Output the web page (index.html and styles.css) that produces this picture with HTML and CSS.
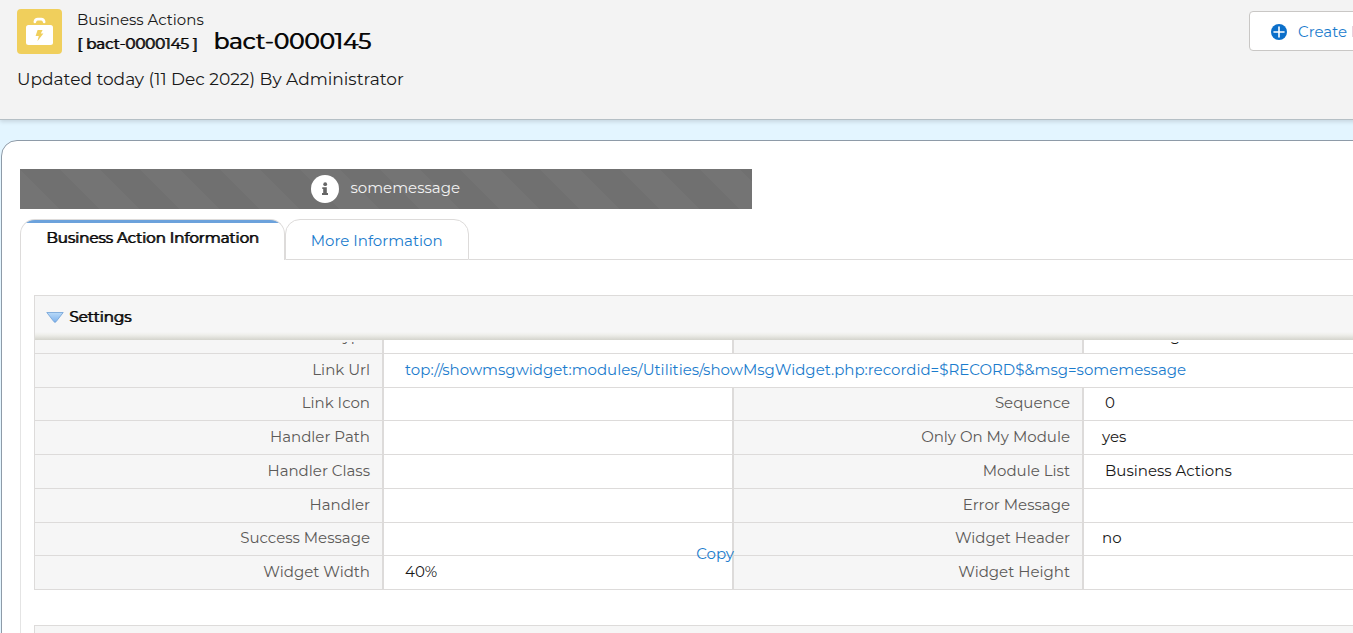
FILE: index.html
```html
<!DOCTYPE html>
<html lang="en">
<head>
<meta charset="utf-8">
<title>bact-0000145 - Business Actions</title>
<link rel="stylesheet" href="styles.css">
</head>
<body>
<header class="page-header">
  <div class="record">
    <div class="record-top">
      <svg class="record-icon" viewBox="0 0 45 45" aria-hidden="true">
        <rect width="45" height="45" rx="4" fill="#f0cf5c"/>
        <path d="M17.800 13q.4-2.900 3-2.900h3.400q2.600 0 3 2.900" fill="none" stroke="#fff" stroke-width="2.600" stroke-linecap="round"/>
        <rect x="9" y="16" width="27" height="20" rx="2.500" fill="#fff"/>
        <path d="M20.600 21h5l-1.800 3.600h2.600l-6 7.600 1.400-5.300h-3.200z" fill="#f0cf5c"/>
      </svg>
      <div class="record-names">
        <div class="module">Business Actions</div>
        <div class="title-row">
          <span class="record-id strong">[ bact-0000145 ]</span>
          <h1 class="record-title strong">bact-0000145</h1>
        </div>
      </div>
    </div>
    <p class="updated">Updated today (11 Dec 2022) By Administrator</p>
  </div>
  <div class="actions">
    <button class="create" type="button">
      <svg class="plus" viewBox="0 0 16 16" aria-hidden="true">
        <circle cx="8" cy="8" r="8" fill="#0b6fca"/>
        <path d="M8 3v10M3 8h10" stroke="#fff" stroke-width="1.600" stroke-linecap="round"/>
      </svg>
      Create Event
    </button>
  </div>
</header>

<main class="panel">
  <div class="banner" role="status">
    <svg class="info" viewBox="0 0 28 28" aria-hidden="true">
      <circle cx="14" cy="14" r="14" fill="#fff"/>
      <circle cx="14.200" cy="9.200" r="1.900" fill="#666"/>
      <path d="M11.300 12.200h4.500v5.900H17v1.900h-6v-1.900h1.200v-4h-.9z" fill="#666"/>
    </svg>
    <span class="message">somemessage</span>
  </div>

  <nav class="tabs">
    <a class="tab active strong" href="#info">Business Action Information</a>
    <a class="tab" href="#more">More Information</a>
    <span class="tabs-rest"></span>
  </nav>

  <div class="tab-body" id="info">
    <section class="block">
      <h2 class="block-head strong">
        <svg class="arrow" viewBox="0 0 18 12" aria-hidden="true">
          <defs>
            <linearGradient id="arrowFill" x1="0" y1="0" x2="0" y2="1">
              <stop offset="0" stop-color="#b9daf8"/>
              <stop offset="1" stop-color="#7db1ec"/>
            </linearGradient>
          </defs>
          <path d="M.8 1.500h16.400L10 10.800q-1 1-2 0z" fill="url(#arrowFill)" stroke="#6f9fd6" stroke-width=".8"/>
        </svg>
        Settings
      </h2>
      <div class="fields">
        <table class="grid">
          <tbody>
            <tr class="scrolled"><th scope="row"><div class="clip"><span>Type</span></div></th><td></td><th></th><td><div class="clip"><span>somemsg</span></div></td></tr>
            <tr><th scope="row">Link Url</th><td colspan="3"><a href="#link">top://showmsgwidget:modules/Utilities/showMsgWidget.php:recordid=$RECORD$&amp;msg=somemessage</a></td></tr>
            <tr><th scope="row">Link Icon</th><td></td><th scope="row">Sequence</th><td>0</td></tr>
            <tr><th scope="row">Handler Path</th><td></td><th scope="row">Only On My Module</th><td class="flag">yes</td></tr>
            <tr><th scope="row">Handler Class</th><td></td><th scope="row">Module List</th><td>Business Actions</td></tr>
            <tr><th scope="row">Handler</th><td></td><th scope="row">Error Message</th><td></td></tr>
            <tr><th scope="row">Success Message</th><td></td><th scope="row">Widget Header</th><td class="flag">no</td></tr>
            <tr><th scope="row">Widget Width</th><td>40%</td><th scope="row">Widget Height</th><td></td></tr>
          </tbody>
        </table>
        <a class="copy" href="#copy">Copy</a>
      </div>
    </section>
    <section class="block">
      <h2 class="block-head"></h2>
    </section>
  </div>
</main>
</body>
</html>
```
FILE: styles.css
```css
* {
  box-sizing: border-box;
}

body {
  margin: 0;
  height: 100vh;
  overflow: hidden;
  background: #e3f5ff;
  color: #181818;
  font-family: Montserrat, Inter, "Open Sans", sans-serif;
  font-size: 15px;
  line-height: 20px;
}

a {
  color: #1b7ccd;
  text-decoration: none;
}

.strong {
  color: #080707;
  font-weight: 400;
  text-shadow: 1px 0 0 currentColor;
}

.page-header {
  display: flex;
  min-width: 1484px;
  min-height: 120px;
  padding: 9px 0 0 17px;
  background: #f3f3f3;
  border-bottom: 1px solid #b5bfc5;
  box-shadow: 0 2px 4px rgba(0, 0, 0, 0.12);
}

.record {
  flex: 1;
}

.record-top {
  display: flex;
  gap: 15px;
}

.record-icon {
  width: 45px;
  height: 45px;
}

.record-names {
  padding-top: 1px;
}

.title-row {
  display: flex;
  align-items: baseline;
  gap: 16px;
}

.record-title {
  margin: 0;
  font-size: 23px;
  line-height: 22px;
}

.updated {
  margin: 13px 0 0;
  font-size: 17px;
  line-height: 24px;
}

.actions {
  flex: 0 0 235px;
  padding-top: 2px;
}

.create {
  display: flex;
  align-items: center;
  gap: 11px;
  height: 40px;
  padding: 1px 21px 0;
  background: #fff;
  border: 1px solid #c9c7c5;
  border-radius: 4px;
  color: #1b7ccd;
  font: inherit;
}

.plus {
  width: 16px;
  height: 16px;
}

.panel {
  min-width: 1501px;
  min-height: 100vh;
  margin: 20px 0 0 1px;
  padding: 28px 18px 0;
  background: #fff;
  border: 1px solid #8e9ba8;
  border-radius: 16px;
}

.banner {
  display: flex;
  align-items: center;
  justify-content: center;
  gap: 11px;
  width: 50%;
  height: 40px;
  background: linear-gradient(45deg, #707070 25%, #747474 25% 50%, #707070 50% 75%, #747474 75%) 0 0 / 80px 80px;
  color: #f2f2f2;
}

.info {
  width: 28px;
  height: 28px;
}

.message {
  padding-bottom: 2px;
}

.tabs {
  display: flex;
  margin-top: 10px;
}

.tab {
  height: 41px;
  padding: 11px 25px 0;
  border: 1px solid #dddbda;
  border-radius: 15px 15px 0 0;
}

.tab.active {
  padding-top: 8px;
  border-bottom: 0;
  background: linear-gradient(#6ca2dc 3px, #fff 3px);
}

.tabs-rest {
  flex: 1;
  border-bottom: 1px solid #dddbda;
}

.tab-body {
  padding: 35px 49px 0 13px;
  border-left: 1px solid #e4e4e4;
}

.block {
  margin-bottom: 35px;
}

.block-head {
  display: flex;
  align-items: center;
  gap: 5px;
  height: 45px;
  margin: 0;
  padding: 0 11px 3px;
  background: linear-gradient(#f6f6f6 36px, #eeeeea 39px, #d4d4cd 44px);
  border: 1px solid #dddbda;
  border-bottom: 0;
  font-size: 15px;
}

.arrow {
  width: 18px;
  height: 12px;
}

.fields {
  position: relative;
}

.grid {
  width: 100%;
  table-layout: fixed;
  border-collapse: separate;
  border-spacing: 0;
}

.grid th,
.grid td {
  height: 34px;
  padding: 0 21px 2px;
  border-bottom: 1px solid #dddbda;
  text-align: left;
  font-weight: 400;
}

.grid tr:nth-child(4n + 3) > * {
  height: 33px;
}

.grid th {
  padding: 0 12px 2px;
  background: #f6f6f6;
  border-right: 2px solid #dddbda;
  color: #5c5a58;
  text-align: right;
}

.grid th:first-child {
  border-left: 1px solid #dddbda;
}

.grid td:nth-child(2):not([colspan]) {
  border-right: 2px solid #dddbda;
}

.grid td.flag {
  padding-left: 18px;
}

.grid .scrolled > * {
  height: 14px;
  padding-bottom: 0;
  vertical-align: bottom;
}

.clip {
  display: flex;
  flex-direction: column;
  justify-content: flex-end;
  height: 11px;
  overflow: hidden;
}

.clip span {
  flex: none;
  height: 27px;
}

.copy {
  position: absolute;
  right: 50%;
  bottom: 26px;
}
```
